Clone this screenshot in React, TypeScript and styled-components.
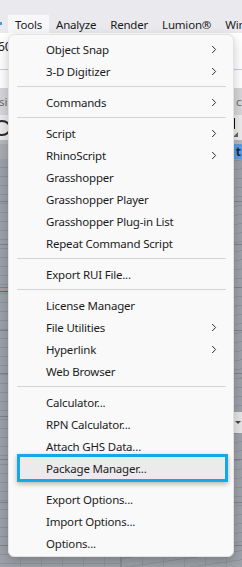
import styled, { createGlobalStyle } from 'styled-components';

const GlobalStyle = createGlobalStyle`
  html, body {
    margin: 0;
    padding: 0;
    background: #9da1a9;
  }
  body {
    font-family: 'Noto Sans', 'Open Sans', sans-serif;
    -webkit-font-smoothing: antialiased;
  }
`;

type Entry = { label?: string; sub?: boolean; separator?: boolean; hidden?: boolean; highlighted?: boolean };

const menuEntries: Entry[] = [
  { label: 'Object Snap', sub: true },
  { label: '3-D Digitizer', sub: true },
  { separator: true },
  { label: 'Commands', sub: true },
  { separator: true },
  { label: 'Script', sub: true },
  { label: 'RhinoScript', sub: true },
  { label: 'Grasshopper' },
  { label: 'Grasshopper Player' },
  { label: 'Grasshopper Plug-in List' },
  { label: 'Repeat Command Script' },
  { separator: true },
  { label: 'Export RUI File...' },
  { separator: true },
  { label: 'License Manager' },
  { label: 'File Utilities', sub: true },
  { label: 'Hyperlink', sub: true },
  { label: 'Web Browser' },
  { separator: true },
  { label: 'Calculator...' },
  { label: 'RPN Calculator...' },
  { label: 'Attach GHS Data...' },
  { label: 'Package Manager...', highlighted: true },
  { separator: true, hidden: true },
  { label: 'Export Options...' },
  { label: 'Import Options...' },
  { label: 'Options...' },
];

const menuBarItems = ['Tools', 'Analyze', 'Render', 'Lumion®', 'Window'];

const Chevron = () => (
  <svg width="6" height="9" viewBox="0 0 6 9">
    <polyline points="1.2,1 4.6,4.5 1.2,8" fill="none" stroke="#2a2a2a" strokeWidth="1" />
  </svg>
);

const App = () => {
  return (
    <Screen>
      <GlobalStyle />
      <TopBar>
        <MenuBar>
          <EdgeMark />
          {menuBarItems.map((item, i) => (
            <MenuBarItem key={item} $active={i === 0}>
              {item}
            </MenuBarItem>
          ))}
        </MenuBar>
      </TopBar>
      <Toolbar>
        <ToolbarText>160</ToolbarText>
      </Toolbar>
      <ToolbarGap />
      <TabStrip>
        <TabText>Basi</TabText>
        <TabText>ce</TabText>
      </TabStrip>
      <IconRow>
        <RoundIcon />
        <RightTools>
          <BarIcon />
          <CornerMark />
        </RightTools>
      </IconRow>
      <Viewports>
        <Viewport>
          <ViewportTitle />
          <Grid $axis={132} />
        </Viewport>
        <Viewport>
          <ViewportTitle $active>
            <TitleText>t</TitleText>
          </ViewportTitle>
          <Grid $axis={-1} $skew />
          <ViewportDropdown />
        </Viewport>
      </Viewports>

      <Menu>
        {menuEntries.map((entry, i) =>
          entry.separator ? (
            <Separator key={i} $hidden={entry.hidden} />
          ) : (
            <MenuItem key={i} $highlighted={entry.highlighted}>
              <ItemLabel>{entry.label}</ItemLabel>
              {entry.sub && <Chevron />}
            </MenuItem>
          )
        )}
      </Menu>
    </Screen>
  );
};

const Screen = styled.div`
  position: relative;
  width: 242px;
  height: 567px;
  overflow: hidden;
  display: flex;
  flex-direction: column;
  background: #9da1a9;
`;

const TopBar = styled.div`
  height: 33px;
  background: #eaeaee;
  display: flex;
  align-items: flex-end;
`;

const MenuBar = styled.div`
  display: flex;
  height: 18px;
  align-items: stretch;
  white-space: nowrap;
`;

const EdgeMark = styled.div`
  width: 2px;
  height: 3px;
  margin: 7px 6px 0 0;
  background: #3aa0e0;
`;

const MenuBarItem = styled.div<{ $active?: boolean }>`
  display: flex;
  align-items: center;
  padding: 0 7px;
  font-size: 11.5px;
  letter-spacing: -0.2px;
  color: #1a1a1a;
  background: ${({ $active }) => ($active ? '#f7f7f9' : 'transparent')};
`;

const Toolbar = styled.div`
  height: 37px;
  background: #ffffff;
  border-bottom: 1px solid #c9cce0;
  box-sizing: border-box;
`;

const ToolbarText = styled.div`
  margin: 4px 0 0 -10px;
  font-size: 13px;
  color: #1a1a1a;
`;

const ToolbarGap = styled.div`
  height: 18px;
  background: #ffffff;
`;

const TabStrip = styled.div`
  height: 27px;
  background: #d7d7da;
  display: flex;
  justify-content: space-between;
  align-items: center;
  overflow: hidden;
`;

const TabText = styled.span`
  font-size: 11.5px;
  color: #6a6a70;
  &:first-child {
    margin-left: -15px;
  }
  &:last-child {
    margin-right: -6px;
  }
`;

const IconRow = styled.div`
  height: 25px;
  background: #ececee;
  display: flex;
  justify-content: space-between;
  align-items: center;
  border-bottom: 4px solid #b6b9bf;
`;

const RoundIcon = styled.div`
  width: 14px;
  height: 12px;
  margin-left: -7px;
  border: 2px solid #2a2a2a;
  border-radius: 50%;
`;

const RightTools = styled.div`
  display: flex;
  flex-direction: column;
  align-items: flex-end;
  gap: 3px;
  margin-right: 4px;
`;

const BarIcon = styled.div`
  width: 2px;
  height: 11px;
  background: #111;
  margin-right: 3px;
`;

const CornerMark = styled.div`
  width: 0;
  height: 0;
  border-left: 5px solid transparent;
  border-bottom: 5px solid #666;
`;

const Viewports = styled.div`
  flex: 1;
  display: grid;
  grid-template-columns: 1fr 1fr;
  gap: 2px;
  background: #8a8e96;
`;

const Viewport = styled.div`
  position: relative;
  display: flex;
  flex-direction: column;
  background: #9da1a9;
`;

const ViewportTitle = styled.div<{ $active?: boolean }>`
  height: 15px;
  background: ${({ $active }) => ($active ? '#5b9de6' : '#a9acb3')};
  display: flex;
  justify-content: flex-end;
  align-items: center;
`;

const TitleText = styled.span`
  font-size: 12px;
  font-weight: 700;
  color: #1d2a3a;
  margin-right: 1px;
`;

const Grid = styled.div<{ $axis: number; $skew?: boolean }>`
  flex: 1;
  background-color: #9da1a9;
  background-image: ${({ $axis }) =>
      $axis >= 0
        ? `linear-gradient(to bottom, transparent ${$axis}px, #b04a50 ${$axis}px, #b04a50 ${$axis + 1}px, transparent ${$axis + 1}px),`
        : ''}
    repeating-linear-gradient(
      to bottom,
      transparent 0,
      transparent 42px,
      #7f838b 42px,
      #7f838b 43px
    ),
    repeating-linear-gradient(
      ${({ $skew }) => ($skew ? '172deg' : 'to bottom')},
      transparent 0,
      transparent 8px,
      #8f939b 8px,
      #8f939b 9px
    ),
    repeating-linear-gradient(
      to right,
      transparent 0,
      transparent 20px,
      #92969e 20px,
      #92969e 21px
    );
`;

const ViewportDropdown = styled.div`
  position: absolute;
  right: 0;
  top: 268px;
  width: 9px;
  height: 21px;
  background: #e6e6e8;
  border-radius: 2px 0 0 2px;
  &::after {
    content: '';
    position: absolute;
    left: 2px;
    top: 9px;
    border-left: 3px solid transparent;
    border-right: 3px solid transparent;
    border-top: 3px solid #444;
  }
`;

const Menu = styled.div`
  position: absolute;
  top: 34px;
  left: 8px;
  width: 226px;
  box-sizing: border-box;
  padding: 3px 0 2px;
  background: #f9f9f9;
  border: 1px solid #e2e2e2;
  border-radius: 6px;
  box-shadow: 0 4px 12px rgba(0, 0, 0, 0.22);
  font-family: 'Noto Sans', 'Open Sans', sans-serif;
`;

const MenuItem = styled.div<{ $highlighted?: boolean }>`
  height: 22px;
  display: flex;
  align-items: center;
  margin: ${({ $highlighted }) => ($highlighted ? '0 8px 0 11px' : '0 4px')};
  padding: ${({ $highlighted }) => ($highlighted ? '0 12px 0 26px' : '0 12px 0 33px')};
  border-radius: ${({ $highlighted }) => ($highlighted ? '0' : '4px')};
  background: ${({ $highlighted }) => ($highlighted ? '#ebebeb' : 'transparent')};
  box-shadow: ${({ $highlighted }) =>
    $highlighted ? '0 0 0 3px #14a8e9, 0 2px 5px 3px rgba(0, 0, 0, 0.28)' : 'none'};
`;

const ItemLabel = styled.span`
  flex: 1;
  font-size: 11.5px;
  letter-spacing: -0.2px;
  color: #1b1b1b;
  white-space: nowrap;
`;

const Separator = styled.div<{ $hidden?: boolean }>`
  height: 9px;
  margin: 0 7px 0 8px;
  background: ${({ $hidden }) =>
    $hidden ? 'transparent' : 'linear-gradient(to bottom, transparent 4px, #d4d4d4 4px, #d4d4d4 5px, transparent 5px)'};
`;

export default App;
